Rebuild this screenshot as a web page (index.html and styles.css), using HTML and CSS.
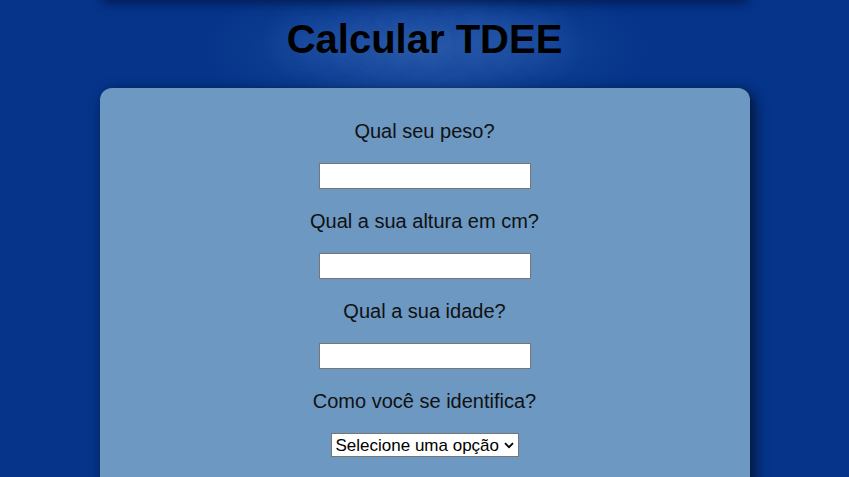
FILE: index.html
```html
<!DOCTYPE html>
<html lang="pt-BR">
<head>
    <meta charset="UTF-8">
    <meta name="viewport" content="width=device-width, initial-scale=1.0">
    <title>Calcular TDEE</title>
    <link rel="stylesheet" href="styles.css">
</head>
<body>
    <div class="top-shade"></div>

    <h1>Calcular TDEE</h1>

    <form class="tdee-form">
        <!-- Peso -->
        <label for="peso">Qual seu peso?</label>
        <input type="text" id="peso" name="peso">

        <!-- Altura -->
        <label for="altura">Qual a sua altura em cm?</label>
        <input type="text" id="altura" name="altura">

        <!-- Idade -->
        <label for="idade">Qual a sua idade?</label>
        <input type="text" id="idade" name="idade">

        <!-- Sexo -->
        <label for="sexo">Como você se identifica?</label>
        <span class="select-wrap">
            <select id="sexo" name="sexo">
                <option>Selecione uma opção</option>
                <option>Masculino</option>
                <option>Feminino</option>
            </select>
            <svg class="select-arrow" width="10" height="7" viewBox="0 0 10 7">
                <path d="M1 1.2 L5 5.2 L9 1.2" fill="none" stroke="#000" stroke-width="1.8"/>
            </svg>
        </span>
    </form>
</body>
</html>
```

FILE: styles.css
```css
/* General Styling */
html {
    background-color: #05348a;
}

body {
    font-family: Arial, "Liberation Sans", sans-serif;
    color: #111;
    margin: 0;
    padding: 0 8px;
    min-height: 477px;
    overflow: hidden;
    position: relative;
    background: radial-gradient(ellipse 230px 75px at 50% 48px, #2758a6 0%, #1a4a9e 40%, #0a3a8e 75%, rgba(5, 52, 138, 0) 100%), #05348a;
}

/* shadow of the block above the fold */
.top-shade {
    position: absolute;
    top: -30px;
    left: 105px;
    width: 640px;
    height: 30px;
    box-shadow: 0 0 12px 2px rgba(0, 10, 40, 0.7);
}

h1 {
    text-align: center;
    font-size: 40px;
    font-weight: 700;
    color: #000;
    margin: 0;
    padding: 16px 0 26px;
    line-height: 46px;
    text-shadow: 0 0 30px rgba(90, 140, 215, 0.35);
}

/* Form Card */
.tdee-form {
    width: 650px;
    margin: 0 auto;
    padding: 31px 0 40px;
    background-color: #6c98c2;
    border-radius: 12px;
    box-shadow: 4px 4px 14px rgba(0, 0, 0, 0.65);
    display: flex;
    flex-direction: column;
    align-items: center;
}

.tdee-form label {
    font-size: 20px;
    line-height: 24px;
    margin: 0 0 20px;
}

.tdee-form input {
    width: 212px;
    height: 26px;
    box-sizing: border-box;
    border: 1px solid #767676;
    background: #fff;
    margin: 0 0 20px;
    padding: 1px 2px;
}

/* Select */
.select-wrap {
    position: relative;
    display: inline-block;
    line-height: 0;
}

.select-wrap select {
    -webkit-appearance: none;
    appearance: none;
    font-family: Arial, "Liberation Sans", sans-serif;
    font-size: 17px;
    color: #000;
    height: 24px;
    width: 188px;
    padding: 0 18px 0 4px;
    border: 1px solid #767676;
    border-radius: 0;
    background: #fff;
}

.select-arrow {
    position: absolute;
    right: 5px;
    top: 9px;
    pointer-events: none;
}
```
